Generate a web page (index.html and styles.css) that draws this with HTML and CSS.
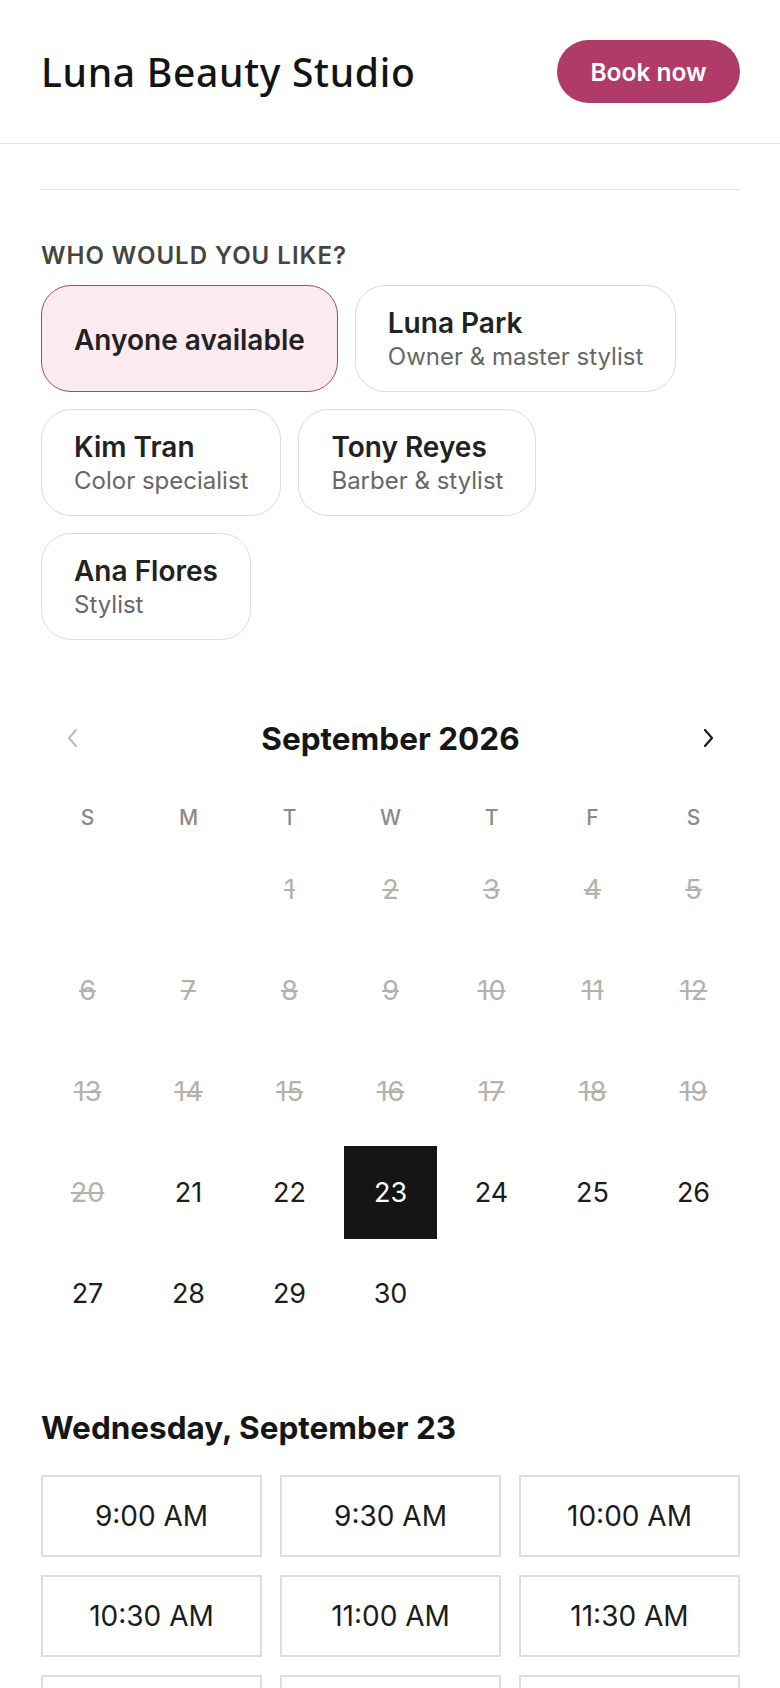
FILE: index.html
```html
<!DOCTYPE html>
<html lang="en">
<head>
  <meta charset="UTF-8" />
  <meta name="viewport" content="width=device-width, initial-scale=1.0" />
  <title>Luna Beauty Studio - Book</title>
  <link rel="stylesheet" href="styles.css">
</head>
<body>
<header class="topbar">
  <h1 class="brand">Luna Beauty Studio</h1>
  <button class="book-btn">Book now</button>
</header>

<main class="page">
  <div class="spacer"></div>

  <section class="staff">
    <h4 class="label">Who would you like?</h4>
    <div class="chips">
      <button class="chip selected"><span class="chip-name">Anyone available</span></button>
      <button class="chip"><span class="chip-name">Luna Park</span><span class="chip-role">Owner &amp; master stylist</span></button>
      <button class="chip"><span class="chip-name">Kim Tran</span><span class="chip-role">Color specialist</span></button>
      <button class="chip"><span class="chip-name">Tony Reyes</span><span class="chip-role">Barber &amp; stylist</span></button>
      <button class="chip"><span class="chip-name">Ana Flores</span><span class="chip-role">Stylist</span></button>
    </div>
  </section>

  <section class="calendar">
    <div class="cal-head">
      <button class="nav-btn disabled" aria-label="Previous month">
        <svg width="12" height="20" viewBox="0 0 12 20"><path d="M10 2 L3 10 L10 18" fill="none" stroke="currentColor" stroke-width="2" stroke-linecap="round" stroke-linejoin="round"/></svg>
      </button>
      <h3 class="month">September 2026</h3>
      <button class="nav-btn" aria-label="Next month">
        <svg width="12" height="20" viewBox="0 0 12 20"><path d="M2 2 L9 10 L2 18" fill="none" stroke="currentColor" stroke-width="2.2" stroke-linecap="round" stroke-linejoin="round"/></svg>
      </button>
    </div>
    <div class="weekdays">
      <span>S</span><span>M</span><span>T</span><span>W</span><span>T</span><span>F</span><span>S</span>
    </div>
    <div class="days" id="days"></div>
  </section>

  <section class="times">
    <h3 class="day-title">Wednesday, September 23</h3>
    <div class="slots">
      <button class="slot">9:00 AM</button>
      <button class="slot">9:30 AM</button>
      <button class="slot">10:00 AM</button>
      <button class="slot">10:30 AM</button>
      <button class="slot">11:00 AM</button>
      <button class="slot">11:30 AM</button>
      <button class="slot">12:00 PM</button>
      <button class="slot">1:00 PM</button>
      <button class="slot">1:30 PM</button>
    </div>
  </section>
</main>

<script>
  // September 2026 starts on a Tuesday
  const firstWeekday = 2;
  const daysInMonth = 30;
  const today = 21;
  const selected = 23;
  const grid = document.getElementById('days');

  for (let i = 0; i < firstWeekday; i++) {
    const blank = document.createElement('span');
    blank.className = 'day empty';
    grid.appendChild(blank);
  }

  for (let d = 1; d <= daysInMonth; d++) {
    const cell = document.createElement('button');
    cell.className = 'day';
    if (d < today) cell.classList.add('past');
    if (d === selected) cell.classList.add('active');
    cell.textContent = d;
    grid.appendChild(cell);
  }
</script>
</body>
</html>
```

FILE: styles.css
```css
* {
  box-sizing: border-box;
}
body {
  margin: 0;
  background: #fff;
  color: #1c1c1c;
  font-family: Inter, "Liberation Sans", sans-serif;
}
button {
  font-family: inherit;
  cursor: pointer;
}

.topbar {
  height: 144px;
  padding: 0 40px 0 41px;
  display: flex;
  align-items: center;
  justify-content: space-between;
  border-bottom: 1px solid #e4e4e4;
  background: rgba(255, 255, 255, 0.96);
}
.brand {
  margin: 0;
  font-family: "Noto Sans", sans-serif;
  font-weight: 500;
  font-size: 39px;
  letter-spacing: 0.7px;
  color: #141414;
}
.book-btn {
  width: 183px;
  height: 63px;
  border: none;
  border-radius: 32px;
  background: #b03a68;
  color: #fff;
  font-size: 24.5px;
  font-weight: 600;
}

.page {
  padding: 0 40px 0 41px;
}
.spacer {
  height: 46px;
  border-bottom: 1px solid #e4e4e4;
}

.staff {
  padding-top: 53px;
}
.label {
  margin: 0 0 16px;
  font-size: 24px;
  font-weight: 600;
  letter-spacing: 1px;
  text-transform: uppercase;
  color: #444;
  line-height: 26px;
}
.chips {
  display: flex;
  flex-wrap: wrap;
  gap: 17px;
}
.chip {
  height: 107px;
  padding: 2px 32px 0;
  display: flex;
  flex-direction: column;
  justify-content: center;
  align-items: flex-start;
  background: #fff;
  border: 1.5px solid #dcdcdc;
  border-radius: 30px;
  text-align: left;
}
.chip.selected {
  background: #fbeaf0;
  border-color: #a3496f;
}
.chip-name {
  font-size: 28px;
  font-weight: 600;
  line-height: 34px;
  color: #222;
}
.chip-role {
  font-size: 24px;
  line-height: 34px;
  color: #676767;
}

.calendar {
  padding-top: 78px;
}
.cal-head {
  height: 40px;
  padding: 0 9px;
  display: flex;
  align-items: center;
  justify-content: space-between;
}
.month {
  margin: 0;
  font-size: 31.5px;
  font-weight: 700;
  color: #161616;
}
.nav-btn {
  width: 44px;
  height: 44px;
  padding: 0;
  border: none;
  background: none;
  color: #1a1a1a;
  display: flex;
  align-items: center;
  justify-content: center;
}
.nav-btn.disabled {
  color: #b9b9b9;
}
.weekdays,
.days {
  display: grid;
  grid-template-columns: repeat(7, 1fr);
  column-gap: 8px;
}
.weekdays {
  margin-top: 40px;
  height: 38px;
  align-items: center;
  text-align: center;
  font-size: 21px;
  font-weight: 500;
  color: #8a8a86;
}
.days {
  margin-top: 7px;
  row-gap: 8px;
}
.day {
  height: 93px;
  border: none;
  background: none;
  font-size: 27px;
  color: #1c1c1c;
  padding: 0;
}
.day.past {
  color: #b3b2ac;
  text-decoration: line-through;
}
.day.active {
  background: #151515;
  color: #fff;
}

.times {
  padding-top: 70px;
}
.day-title {
  margin: 0 0 29px;
  font-size: 31.5px;
  line-height: 36px;
  font-weight: 700;
  color: #161616;
}
.slots {
  display: grid;
  grid-template-columns: repeat(3, 1fr);
  gap: 18px;
}
.slot {
  height: 82px;
  background: #fff;
  border: 2px solid #dedede;
  font-size: 28px;
  color: #1c1c1c;
}
```
